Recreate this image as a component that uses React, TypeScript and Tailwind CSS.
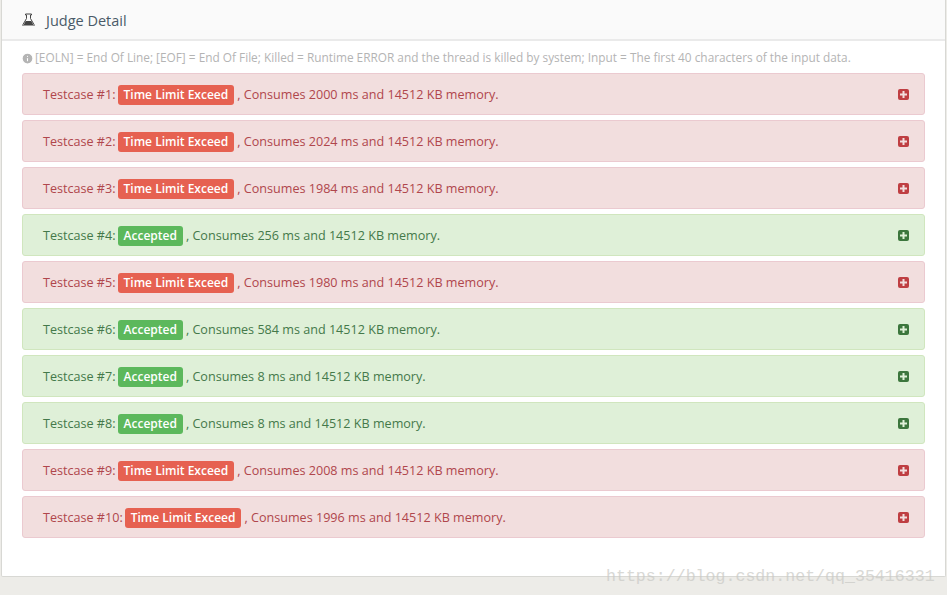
import { Info } from "lucide-react";

const rows = [
  { id: 1, ok: false, ms: 2000 },
  { id: 2, ok: false, ms: 2024 },
  { id: 3, ok: false, ms: 1984 },
  { id: 4, ok: true, ms: 256 },
  { id: 5, ok: false, ms: 1980 },
  { id: 6, ok: true, ms: 584 },
  { id: 7, ok: true, ms: 8 },
  { id: 8, ok: true, ms: 8 },
  { id: 9, ok: false, ms: 2008 },
  { id: 10, ok: false, ms: 1996 },
];

function PlusSquare({ ok }: { ok: boolean }) {
  return (
    <svg width="11" height="11" viewBox="0 0 11 11" className={ok ? "text-[#3c763d]" : "text-[#bf3e42]"}>
      <rect width="11" height="11" rx="2" fill="currentColor" />
      <path d="M4.5 2h2v2.5H9v2H6.500V9h-2V6.500H2v-2h2.500z" fill={ok ? "#dff0d8" : "#f2dede"} />
    </svg>
  );
}

function Flask() {
  return (
    <svg width="13" height="13" viewBox="0 0 13 13" className="text-[#444]">
      <path d="M3.500 1h6v1h-1v3.500l3.600 6.200c.3.600 0 1.300-.7 1.300H1.600c-.7 0-1-.7-.7-1.300L4.500 5.500V2h-1z" fill="none" stroke="currentColor" strokeWidth="1" />
      <path d="M3.700 8h5.600l2.100 4H1.600z" fill="currentColor" />
    </svg>
  );
}

function Row({ id, ok, ms }: { id: number; ok: boolean; ms: number }) {
  return (
    <div
      className={
        "flex h-[42px] items-center justify-between rounded-[3px] border pl-5 pr-[15px] " +
        (ok ? "border-[#d0e6be] bg-[#dff0d8] text-[#44794a]" : "border-[#ebcad0] bg-[#f2dede] text-[#b0464c]")
      }
    >
      <div className="flex items-center whitespace-nowrap pt-[2px]">
        <span>Testcase #{id}:</span>
        <span
          className={
            "ml-[2px] flex h-5 items-center rounded-[3px] px-[6px] text-[12px] font-semibold text-white " +
            (ok ? "bg-[#5cb85c]" : "bg-[#e66151]")
          }
        >
          {ok ? "Accepted" : "Time Limit Exceed"}
        </span>
        <span className="ml-[3px]">, Consumes {ms} ms and 14512 KB memory.</span>
      </div>
      <PlusSquare ok={ok} />
    </div>
  );
}

export default function App() {
  return (
    <div className="relative h-[595px] w-[947px] overflow-hidden bg-[#edece8] font-['Open_Sans',sans-serif] text-[12.6px]">
      <div className="ml-px mr-[1px] h-[577px] rounded-b-[2px] border-x border-b border-[#d8d8d4] bg-white">
        <div className="flex h-[41px] items-center border-b-2 border-[#eaeaea] bg-[#fafafa] pl-5 text-[#4a5a68]">
          <Flask />
          <span className="ml-[11px] pt-[2px] text-[14.5px]">Judge Detail</span>
        </div>
        <div className="flex h-[32px] items-center gap-px pl-[19px] pt-[2px] text-[11.84px] text-[#b4b4b4]">
          <Info size={13} fill="#b4b4b4" stroke="#fff" />
          <span>[EOLN] = End Of Line; [EOF] = End Of File; Killed = Runtime ERROR and the thread is killed by system; Input = The first 40 characters of the input data.</span>
        </div>
        <div className="ml-5 mr-5 flex flex-col gap-[5px]">
          {rows.map((r) => (
            <Row key={r.id} {...r} />
          ))}
        </div>
      </div>
      <div className="absolute left-[606px] top-[565px] font-['Liberation_Mono',monospace] text-[16.6px] text-[#c9c9c5] opacity-70">
        https://blog.csdn.net/qq_35416331
      </div>
    </div>
  );
}
